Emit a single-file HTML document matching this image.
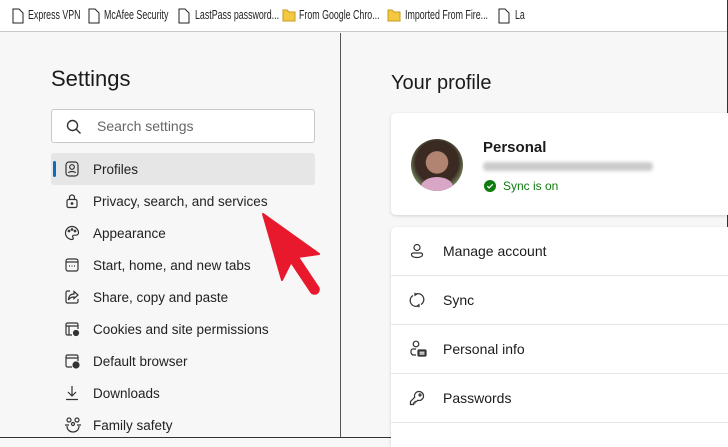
<!DOCTYPE html><html><head><style>
*{margin:0;padding:0;box-sizing:border-box}
body{width:728px;height:438px;overflow:hidden;background:#f7f7f7;font-family:"Liberation Sans",sans-serif;color:#1b1b1b;position:relative}
.abs{position:absolute}
.bar{left:0;top:0;width:728px;height:32px;background:#fff;border-bottom:1px solid #c8c8c8;font-size:13px;color:#222}
.ic{position:absolute;top:8px}
.tx{position:absolute;top:7px;white-space:nowrap;transform:scaleX(.68);transform-origin:0 0}
.side{font-size:13.5px;color:#222}
.item{position:absolute;left:51px;width:264px;height:32px;display:flex;align-items:center}
.item svg{position:absolute;left:13px}
.item span{position:absolute;left:42px}
.row{position:absolute;left:0;width:337px;height:49px;border-bottom:1px solid #e6e6e6;display:flex;align-items:center;font-size:14px}
.row svg{position:absolute;left:18px}
.row span{position:absolute;left:52px}
</style></head><body>
<div class="abs bar">
<svg class="ic" style="left:12px" width="12" height="16" viewBox="0 0 12 16"><path d="M1 1h6l4 4v10H1z" fill="none" stroke="#222"/></svg><span class="tx" style="left:28px">Express VPN</span>
<svg class="ic" style="left:88px" width="12" height="16" viewBox="0 0 12 16"><path d="M1 1h6l4 4v10H1z" fill="none" stroke="#222"/></svg><span class="tx" style="left:104px">McAfee Security</span>
<svg class="ic" style="left:178px" width="12" height="16" viewBox="0 0 12 16"><path d="M1 1h6l4 4v10H1z" fill="none" stroke="#222"/></svg><span class="tx" style="left:195px">LastPass password...</span>
<svg class="ic" style="left:282px" width="14" height="14" viewBox="0 0 14 14"><path d="M1 2h4l2 2h6v9H1z" fill="#f5c842" stroke="#c99a1e"/></svg><span class="tx" style="left:299px">From Google Chro...</span>
<svg class="ic" style="left:387px" width="14" height="14" viewBox="0 0 14 14"><path d="M1 2h4l2 2h6v9H1z" fill="#f5c842" stroke="#c99a1e"/></svg><span class="tx" style="left:405px">Imported From Fire...</span>
<svg class="ic" style="left:498px" width="12" height="16" viewBox="0 0 12 16"><path d="M1 1h6l4 4v10H1z" fill="none" stroke="#222"/></svg><span class="tx" style="left:515px">La</span>
</div>
<div class="abs" style="left:340px;top:33px;width:1px;height:405px;background:#555"></div>
<div class="abs" style="left:727px;top:0;width:1px;height:438px;background:#333"></div>
<div class="abs" style="left:0;top:437px;width:728px;height:1px;background:#333"></div>
<div class="abs" style="left:51px;top:66px;font-size:22px">Settings</div>
<div class="abs" style="left:51px;top:109px;width:264px;height:34px;background:#fff;border:1px solid #c8c8c8;border-radius:3px">
<svg class="abs" style="left:14px;top:9px" width="16" height="16" viewBox="0 0 16 16"><circle cx="6.5" cy="6.5" r="5" fill="none" stroke="#333" stroke-width="1.4"/><path d="M10 10l4.5 4.5" stroke="#333" stroke-width="1.4"/></svg>
<span class="abs" style="left:45px;top:8px;font-size:14px;color:#666">Search settings</span></div>
<div class="side">
<div class="abs" style="left:51px;top:153px;width:264px;height:32px;background:#e6e6e6;border-radius:3px"></div>
<div class="abs" style="left:53px;top:161px;width:3px;height:16px;background:#0f6cbd;border-radius:2px"></div>
<div class="item" style="top:153px"><svg width="16" height="16" viewBox="0 0 16 16" fill="none" stroke="#333" stroke-width="1.2"><rect x="2" y="1" width="12" height="14" rx="3"/><circle cx="8" cy="6" r="2.3"/><path d="M4.5 12c1-2 6-2 7 0"/></svg><span>Profiles</span></div>
<div class="item" style="top:185px"><svg width="16" height="16" viewBox="0 0 16 16" fill="none" stroke="#333" stroke-width="1.2"><rect x="3" y="6.5" width="10" height="8" rx="1.5"/><path d="M5.5 6.5V4.5a2.5 2.5 0 015 0v2"/><circle cx="8" cy="10.5" r=".8" fill="#333"/></svg><span>Privacy, search, and services</span></div>
<div class="item" style="top:217px"><svg width="16" height="16" viewBox="0 0 16 16" fill="none" stroke="#333" stroke-width="1.2"><path d="M8 1.5a6.5 6.5 0 100 13c1.5 0 1.5-1.5.8-2.3-.7-.8 0-2 1.2-2h2A2.5 2.5 0 0014.5 8 6.5 6.5 0 008 1.5z"/><circle cx="5" cy="6" r=".8"/><circle cx="8" cy="4.5" r=".8"/><circle cx="11" cy="6" r=".8"/></svg><span>Appearance</span></div>
<div class="item" style="top:249px"><svg width="16" height="16" viewBox="0 0 16 16" fill="none" stroke="#333" stroke-width="1.2"><rect x="2" y="2" width="12" height="12" rx="2"/><path d="M2 5h12M5 9h1M7.5 9h1M10 9h1"/></svg><span>Start, home, and new tabs</span></div>
<div class="item" style="top:281px"><svg width="16" height="16" viewBox="0 0 16 16" fill="none" stroke="#333" stroke-width="1.2"><path d="M6 2H3.5A1.5 1.5 0 002 3.5v9A1.5 1.5 0 003.5 14h9a1.5 1.5 0 001.5-1.5V10"/><path d="M10 2.5l4 3.5-4 3.5V8c-3 0-4.5 1-5.5 3 0-4 2-6 5.5-6z"/></svg><span>Share, copy and paste</span></div>
<div class="item" style="top:313px"><svg width="16" height="16" viewBox="0 0 16 16" fill="none" stroke="#333" stroke-width="1.2"><path d="M8 14H3.5A1.5 1.5 0 012 12.5v-9A1.5 1.5 0 013.5 2h9A1.5 1.5 0 0114 3.5V8M2 5h12M5 5v9"/><circle cx="12" cy="12" r="2.5" fill="#333"/></svg><span>Cookies and site permissions</span></div>
<div class="item" style="top:345px"><svg width="16" height="16" viewBox="0 0 16 16" fill="none" stroke="#333" stroke-width="1.2"><path d="M8 14H3.5A1.5 1.5 0 012 12.5v-9A1.5 1.5 0 013.5 2h9A1.5 1.5 0 0114 3.5V8M2 5h12"/><circle cx="12" cy="12" r="3" fill="#333"/></svg><span>Default browser</span></div>
<div class="item" style="top:377px"><svg width="16" height="16" viewBox="0 0 16 16" fill="none" stroke="#333" stroke-width="1.2"><path d="M8 1v10M4 7l4 4 4-4M2 14.5h12"/></svg><span>Downloads</span></div>
<div class="item" style="top:409px"><svg width="18" height="16" viewBox="0 0 18 16" fill="none" stroke="#333" stroke-width="1.2"><circle cx="5" cy="3" r="2"/><circle cx="13" cy="3" r="2"/><circle cx="9" cy="7" r="1.5"/><path d="M1 8h4M13 8h4M3 9c0 4 3 6 6 6s6-2 6-6"/></svg><span>Family safety</span></div>
</div>
<svg class="abs" style="left:260px;top:210px" width="70" height="90" viewBox="0 0 70 90"><path d="M3 4l56 40-21 3 20 30a4 4 0 01-7 5L31 52 22 70z" fill="#e8192c" stroke="#e8192c" stroke-linejoin="round" stroke-width="2"/></svg>
<div class="abs" style="left:391px;top:72px;font-size:20px">Your profile</div>
<div class="abs" style="left:391px;top:113px;width:337px;height:102px;background:#fff;border-radius:5px 0 0 5px;box-shadow:0 1px 3px rgba(0,0,0,.15)">
<div class="abs" style="left:20px;top:26px;width:52px;height:52px;border-radius:50%;background:radial-gradient(circle at 50% 45%,#b08470 0 28%,#3a2a22 30% 55%,#6b7a55 70%),#444;overflow:hidden"><div class="abs" style="left:10px;top:38px;width:32px;height:20px;background:#d9a6c8;border-radius:50% 50% 0 0"></div></div>
<div class="abs" style="left:92px;top:26px;font-size:15px;font-weight:bold">Personal</div>
<div class="abs" style="left:92px;top:49px;width:170px;height:9px;background:#ccc;border-radius:4px;filter:blur(1.5px)"></div>
<svg class="abs" style="left:93px;top:67px" width="12" height="12" viewBox="0 0 12 12"><circle cx="6" cy="6" r="6" fill="#107c10"/><path d="M3.3 6.2l1.8 1.7 3.6-3.6" stroke="#fff" stroke-width="1.3" fill="none"/></svg>
<div class="abs" style="left:112px;top:66px;font-size:12px;color:#107c10">Sync is on</div>
</div>
<div class="abs" style="left:391px;top:227px;width:337px;height:220px;background:#fff;border-radius:5px 0 0 0;box-shadow:0 1px 3px rgba(0,0,0,.15)">
<div class="row" style="top:0"><svg width="16" height="16" viewBox="0 0 16 16" fill="none" stroke="#333" stroke-width="1.2"><circle cx="8" cy="4.5" r="3"/><path d="M2.5 11.5a1.5 1.5 0 011.5-1.5h8a1.5 1.5 0 011.5 1.5c0 2-2.5 3-5.5 3s-5.5-1-5.5-3z"/></svg><span>Manage account</span></div>
<div class="row" style="top:49px"><svg width="16" height="16" viewBox="0 0 16 16" fill="none" stroke="#333" stroke-width="1.2"><path d="M4 3.5A5.5 5.5 0 0010 13.5M12 12.5A5.5 5.5 0 006 2.5M6 0.8v2.5L8 2M10 15.2v-2.5L8 14"/></svg><span>Sync</span></div>
<div class="row" style="top:98px"><svg width="18" height="18" viewBox="0 0 18 18" fill="none" stroke="#333" stroke-width="1.2"><circle cx="7" cy="4" r="2.8"/><path d="M7 9H4a2 2 0 00-2 2v1.5a3 3 0 002 2.5h3"/><rect x="9" y="10" width="8" height="6" rx="1" fill="#333"/><path d="M10.5 12.2h5M10.5 14h5" stroke="#fff"/></svg><span>Personal info</span></div>
<div class="row" style="top:147px"><svg width="16" height="16" viewBox="0 0 16 16" fill="none" stroke="#333" stroke-width="1.2"><path d="M10 1.5a4.5 4.5 0 00-4.3 5.8L1.5 11.5v3h3v-1.5H6v-1.5h1.5l1.2-1.2A4.5 4.5 0 1010 1.5z"/><circle cx="11" cy="5" r="1"/></svg><span>Passwords</span></div>
</div>
</body></html>
